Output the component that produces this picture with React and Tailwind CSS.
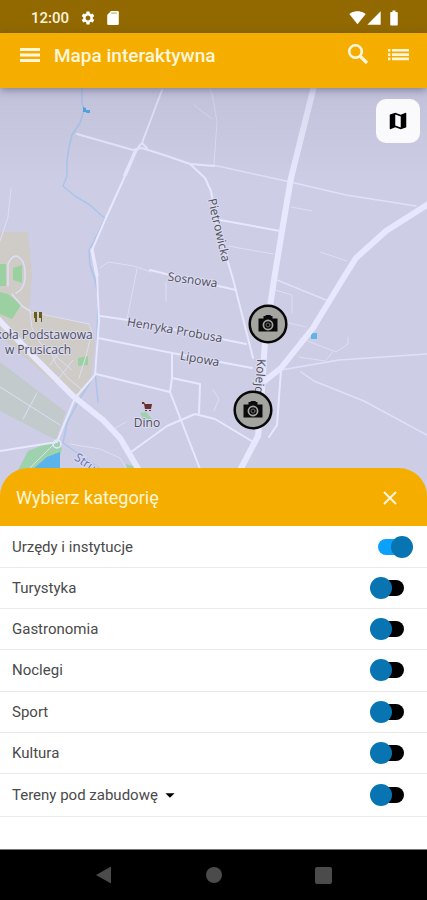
import { useState } from "react";
import {
  MdArrowDropDown,
  MdBatteryFull,
  MdMap,
  MdSettings,
  MdSignalCellular4Bar,
  MdSignalWifi4Bar,
} from "react-icons/md";

const CATEGORIES = [
  { id: "offices", name: "Urzędy i instytucje", on: true },
  { id: "tourism", name: "Turystyka" },
  { id: "food", name: "Gastronomia" },
  { id: "lodging", name: "Noclegi" },
  { id: "sport", name: "Sport" },
  { id: "culture", name: "Kultura" },
  { id: "plots", name: "Tereny pod zabudowę", expandable: true },
];

function StatusBar() {
  return (
    <div className="flex h-[33px] items-center justify-between bg-[#926900] pl-[31px] pr-6 pt-[2px] text-white">
      <div className="flex items-center gap-[11px]">
        <span className="text-[15px] font-medium leading-4 text-[#fdf3dc]">12:00</span>
        <MdSettings className="size-4" />
        <svg viewBox="0 0 12 14" className="h-[14px] w-3" fill="currentColor">
          <path d="M4 0h6.500q1.300 0 1.300 1.300v11.400q0 1.300-1.300 1.300h-9q-1.300 0-1.300-1.300V4z" />
          <path d="M4.200 1.500h5.500v1.200H4.200z" fill="#926900" opacity=".55" />
        </svg>
      </div>
      <div className="flex items-center">
        <MdSignalWifi4Bar className="size-[17px]" />
        <MdSignalCellular4Bar className="size-4" />
        <MdBatteryFull className="ml-[3px] size-[18px]" />
      </div>
    </div>
  );
}

function AppBar() {
  return (
    <header className="relative z-10 flex h-[55px] items-center bg-[#f5ae00] pb-[9px] pl-[18px] pr-4 text-[#fff6dc] shadow-[0_2px_8px_rgba(60,60,90,0.5)]">
      <button type="button" aria-label="Menu">
        <svg viewBox="0 0 24 24" className="size-6" fill="currentColor">
          <path d="M2 4h20v3H2zM2 9.500h20v3H2zM2 15h20v3H2z" />
        </svg>
      </button>
      <h1 className="ml-3 flex-1 text-[19px] font-medium leading-6">Mapa interaktywna</h1>
      <button type="button" aria-label="Szukaj" className="pb-1">
        <svg viewBox="0 0 24 24" className="size-6" fill="none" stroke="currentColor">
          <circle cx="9.500" cy="9.500" r="6.300" strokeWidth="2.600" />
          <path d="M14 14l7 7" strokeWidth="3.200" />
        </svg>
      </button>
      <button type="button" aria-label="Lista" className="ml-[15px]">
        <svg viewBox="0 0 26 24" className="h-6 w-[26px]" fill="currentColor">
          <path d="M3 5h2.400v2.600H3zM7 5h17v2.600H7zM3 9.300h2.400v2.600H3zM7 9.300h17v2.600H7zM3 13.600h2.400v2.600H3zM7 13.600h17v2.600H7z" />
        </svg>
      </button>
    </header>
  );
}

function CameraPin({ x, y }) {
  return (
    <g transform={`translate(${x} ${y})`}>
      <circle r="18.300" fill="#a4a4a0" stroke="#080808" strokeWidth="2.500" />
      <path
        d="M-9.500-5.500h5V-8h2.200v-1h5v1h1.800v2.500h5v13h-19z"
        fill="#0b0b0b"
      />
      <circle cy="1" r="4.600" fill="none" stroke="#a4a4a0" strokeWidth="1.700" />
      <circle cy="1" r="2" fill="none" stroke="#666" strokeWidth="1" />
    </g>
  );
}

function MapCanvas() {
  return (
    <svg
      viewBox="0 88 427 408"
      preserveAspectRatio="xMidYMin slice"
      className="block h-[408px] w-full bg-[#cecde6]"
      role="img"
      aria-label="Mapa"
      fill="none"
      strokeLinecap="round"
      strokeLinejoin="round"
    >
      {/* school grounds and green areas */}
      <path d="M2 232h26l4 43-3 35 62 15 4 20-4 33-11 18-26-14-54-46V232z" fill="#cfcbc6" />
      <path d="M0 362l66 50-10 28-56-29z" fill="#c3cacc" />
      <path d="M0 264h6v22H0zM13 268l9-3v18l-9-3zM0 292l8 2 13 11-9 14-12-5zM78 358l10-2v9l-10 1z" fill="#9bd1a1" />
      <path d="M18 470l10-19 30-12 4 10-6 21zM140 413l6-1 6 7-8 1zM126 464l8 2 3 6h-10z" fill="#9ed2ae" />
      <path d="M32 470l15-13 13-5v18z" fill="#5bb3ec" />

      {/* streams */}
      <g stroke="#a9c5eb" strokeWidth="1.500">
        <path d="M82 88v15l2 7-4 13-8 12-3 12-2 14v15l-4 10 12 10 15 9 12 11 3 2-6 13-10 20 1 14 5 15 3 15-1 48-2 28 3 31" />
        <path d="M94 376l-15 24-12 23-4 20 20 14 19 13" />
      </g>
      <path d="M83 107l3 1v4h-3zM86 110h4v3h-4z" fill="#4aa6e4" />
      <path d="M311 333h6v6h-6z" fill="#5db5e8" />

      {/* footpaths */}
      <g stroke="#dedef5" strokeWidth="1">
        <path d="M11 189l-3 28-8 24M194 105l18 14M210 88l3 10 4 24-3 42M100 268l8-6 26 4 17 6M137 269l-6 30-4 20M166 282v20" />
        <path d="M291 207l21 4M228 246l45 8M320 252l27 9M274 280l-2 9 20 6v18M276 320l30 7M300 338l36 14 12-8v-7M333 352l-8 9-26-4" />
        <path d="M0 387l60 38M37 393l-14 26M30 312l2 16 8 15 32 27M50 350l6 14 12 14 14 12M61 350l-11 15M73 360l-14 18M31 312l58 12 3 8-6 24-7 22M112 430l14-8M70 444l30 5 20 9 6 10M58 440l-28 28M213 390l6 9-5 12" />
        <path d="M8 286v-22q6-12 12-6 6 5 5 20-1 12-9 15M12 294l10 12 8 5" strokeWidth="1.500" />
      </g>
      <path d="M213 165l73 16 60 14 70 11M281 370l58-10 88-6M277 280l49 20M301 372l13 9 50 20 63 34" stroke="#dfe0fa" strokeWidth="1.500" />

      {/* streets */}
      <g stroke="#e7e7fd" strokeWidth="2">
        <path d="M162 90l-20 53-6 7-11 26-20 44-13 30 5 25 2 46-2 27-2 27-20 23-10 24-8 20-57 9" />
        <path d="M77 134l56 16 9-2 25 8 23 8 15 14 6 13 6 34 16 54 20 79M142 143l5 5M190 164l24 2" />
        <path d="M220 220l60 11M150 270l20 5 66 15M100 316l28 4 118 24M98 338l74 15 80 15" />
        <path d="M96 374l74 18M172 353v25l-2 14 30 77M172 378l28 6-1 29M131 452l36-26 28-12 20 5 40 24M281 370l-4 55-8 12" />
      </g>
      <g stroke="#e7e7fd">
        <path d="M136 150l-11 25M92 250l5 25" strokeWidth="3.500" />
        <path d="M314 86l-23 92-8 47-9 55-9 60-3 50-4 46-20 38" strokeWidth="6" />
        <path d="M430 203l-44 28-30 27-12 19-31 51-32 40-20 16" strokeWidth="6" />
        <path d="M-3 318l40 42 36 36 30 24 17 18 20 34" strokeWidth="6" />
      </g>
      <circle cx="57" cy="444" r="4" stroke="#e7e7fd" strokeWidth="1.500" />

      {/* labels */}
      <g
        className="font-['Open_Sans',sans-serif] text-xs"
        fill="#4e4e5b"
        stroke="#dcdcf0"
        strokeWidth="2"
        paintOrder="stroke"
        textAnchor="middle"
      >
        <text transform="translate(215 231) rotate(77)">Pietrowicka</text>
        <text transform="translate(192 284) rotate(8)">Sosnowa</text>
        <text transform="translate(174 334) rotate(10)">Henryka Probusa</text>
        <text transform="translate(199 363) rotate(10)">Lipowa</text>
        <text transform="translate(256 376) rotate(94)">Kolejo</text>
        <text x="44" y="339">koła Podstawowa</text>
        <text x="38" y="354">w Prusicach</text>
        <text x="147" y="427">Dino</text>
        <text transform="translate(83 466) rotate(35)" fill="#6670ad">Stru</text>
      </g>
      <path d="M34 312h3v10h-2v-4h-1zM39 312h3v10h-1v-4h-2z" fill="#695a1d" />
      <path d="M142 402h2l1 2h7l-1 5h-6l-1-5h-2zM145 410h2v1h-2zM149 410h2v1h-2z" fill="#6a3030" />

      <CameraPin x={268} y={324} />
      <CameraPin x={253} y={410} />
    </svg>
  );
}

function CategoryRow({ category, checked, onToggle }) {
  return (
    <li className="flex min-h-[41px] flex-1 items-center justify-between border-b border-[#e9e9e9] pl-3 pr-[23px]">
      <label htmlFor={category.id} className="flex items-center text-[15px] leading-5 text-[#4a4a4a]">
        {category.name}
        {category.expandable && <MdArrowDropDown className="ml-px size-[22px] text-black" />}
      </label>
      <input
        id={category.id}
        type="checkbox"
        role="switch"
        checked={checked}
        onChange={onToggle}
        className="relative h-4 w-[26px] appearance-none rounded-full bg-black before:absolute before:-left-2 before:-top-[3px] before:size-[22px] before:rounded-full before:bg-[#0875b2] checked:bg-[#0ba1fb] checked:before:left-[13px]"
      />
    </li>
  );
}

function CategorySheet() {
  const [active, setActive] = useState(() => CATEGORIES.filter((c) => c.on).map((c) => c.id));

  const toggle = (id) =>
    setActive((prev) => (prev.includes(id) ? prev.filter((x) => x !== id) : [...prev, id]));

  return (
    <section className="relative -mt-7 flex flex-1 flex-col">
      <div className="flex h-[58px] items-center justify-between rounded-t-[28px] bg-[#f5ae00] pl-4 pr-[27px] pt-[2px] text-[#fff6dc]">
        <h2 className="text-lg leading-6">Wybierz kategorię</h2>
        <button type="button" aria-label="Zamknij">
          <svg viewBox="0 0 20 20" className="size-5" fill="none" stroke="currentColor" strokeWidth="2">
            <path d="M4 4l12 12M16 4L4 16" />
          </svg>
        </button>
      </div>
      <ul className="flex flex-1 flex-col bg-white pb-8 pt-px">
        {CATEGORIES.map((c) => (
          <CategoryRow
            key={c.id}
            category={c}
            checked={active.includes(c.id)}
            onToggle={() => toggle(c.id)}
          />
        ))}
      </ul>
    </section>
  );
}

function NavigationBar() {
  return (
    <nav className="flex h-[51px] items-center justify-center gap-[93px] border-t border-[#777] bg-black text-[#4b4b4b]">
      <button type="button" aria-label="Wstecz">
        <svg viewBox="0 0 18 18" className="size-[18px]" fill="currentColor">
          <path d="M16 0.500v17L1 9z" />
        </svg>
      </button>
      <button type="button" aria-label="Ekran główny" className="size-4 rounded-full bg-[#4b4b4b]" />
      <button type="button" aria-label="Ostatnie" className="size-[17px] rounded-[2px] bg-[#4b4b4b]" />
    </nav>
  );
}

export default function App() {
  return (
    <div className="flex min-h-screen flex-col bg-white font-[Roboto,sans-serif]">
      <StatusBar />
      <AppBar />
      <main className="flex flex-1 flex-col">
        <div className="relative">
          <MapCanvas />
          <div className="pointer-events-none absolute inset-x-0 top-0 h-24 bg-linear-to-b from-[#77779022] to-transparent" />
          <button
            type="button"
            aria-label="Rodzaj mapy"
            className="absolute right-[7px] top-[11px] flex size-11 items-center justify-center rounded-[10px] bg-[#fafafc] text-black"
          >
            <MdMap className="size-[22px]" />
          </button>
        </div>
        <CategorySheet />
      </main>
      <NavigationBar />
    </div>
  );
}
